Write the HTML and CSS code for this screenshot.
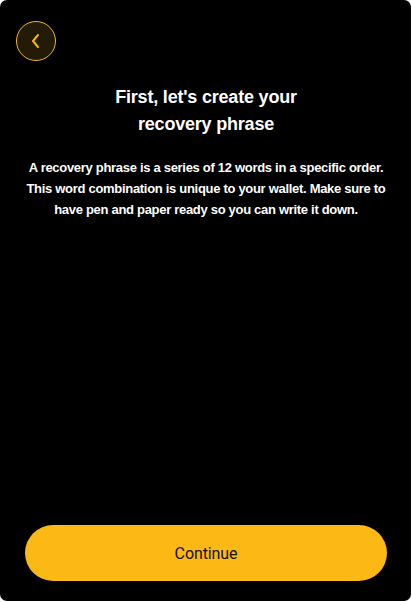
FILE: index.html
```html
<!DOCTYPE html>
<html>
<head>
<meta charset="utf-8">
<link rel="stylesheet" href="styles.css">
</head>
<body>
<div class="screen">
  <div class="top">
    <button class="back" aria-label="Back">
      <svg width="16" height="16" viewBox="0 0 16 16"><path d="M10 2 L5 8 L10 14" fill="none" stroke="#f0b90b" stroke-width="2" stroke-linecap="round" stroke-linejoin="round"/></svg>
    </button>
  </div>
  <h1 class="title">First, let's create your<br>recovery phrase</h1>
  <p class="desc">A recovery phrase is a series of 12 words in a specific order. This word combination is unique to your wallet. Make sure to have pen and paper ready so you can write it down.</p>
  <div class="spacer"></div>
  <button class="continue">Continue</button>
</div>
</body>
</html>
```
FILE: styles.css
```css
html, body {
  margin: 0;
  padding: 0;
  background: #ffffff;
}
.screen {
  box-sizing: border-box;
  width: 411px;
  height: 601px;
  background: #000;
  border-radius: 7px;
  display: flex;
  flex-direction: column;
  padding: 21px 24px 20px 25px;
  font-family: "Liberation Sans", Arial, sans-serif;
  color: #fff;
}
.top {
  display: flex;
  margin-left: -9px;
}
.back {
  width: 40px;
  height: 40px;
  border-radius: 50%;
  border: 1px solid #f0b90b;
  background: #221a05;
  display: flex;
  align-items: center;
  justify-content: center;
  padding: 0;
}
.title {
  margin: 23px 0 0;
  font-size: 18px;
  line-height: 27px;
  font-weight: 700;
  letter-spacing: -0.2px;
  text-align: center;
}
.desc {
  margin: 19px 0 0;
  font-size: 13px;
  line-height: 21px;
  font-weight: 700;
  letter-spacing: -0.3px;
  text-align: center;
}
.spacer { flex: 1; }
.continue {
  height: 56px;
  border: none;
  border-radius: 28px;
  background: #fcb814;
  color: #111111;
  font-family: Roboto, "Liberation Sans", Arial, sans-serif;
  font-size: 16px;
  font-weight: 400;
  letter-spacing: -0.1px;
  padding-top: 2px;
}
```
